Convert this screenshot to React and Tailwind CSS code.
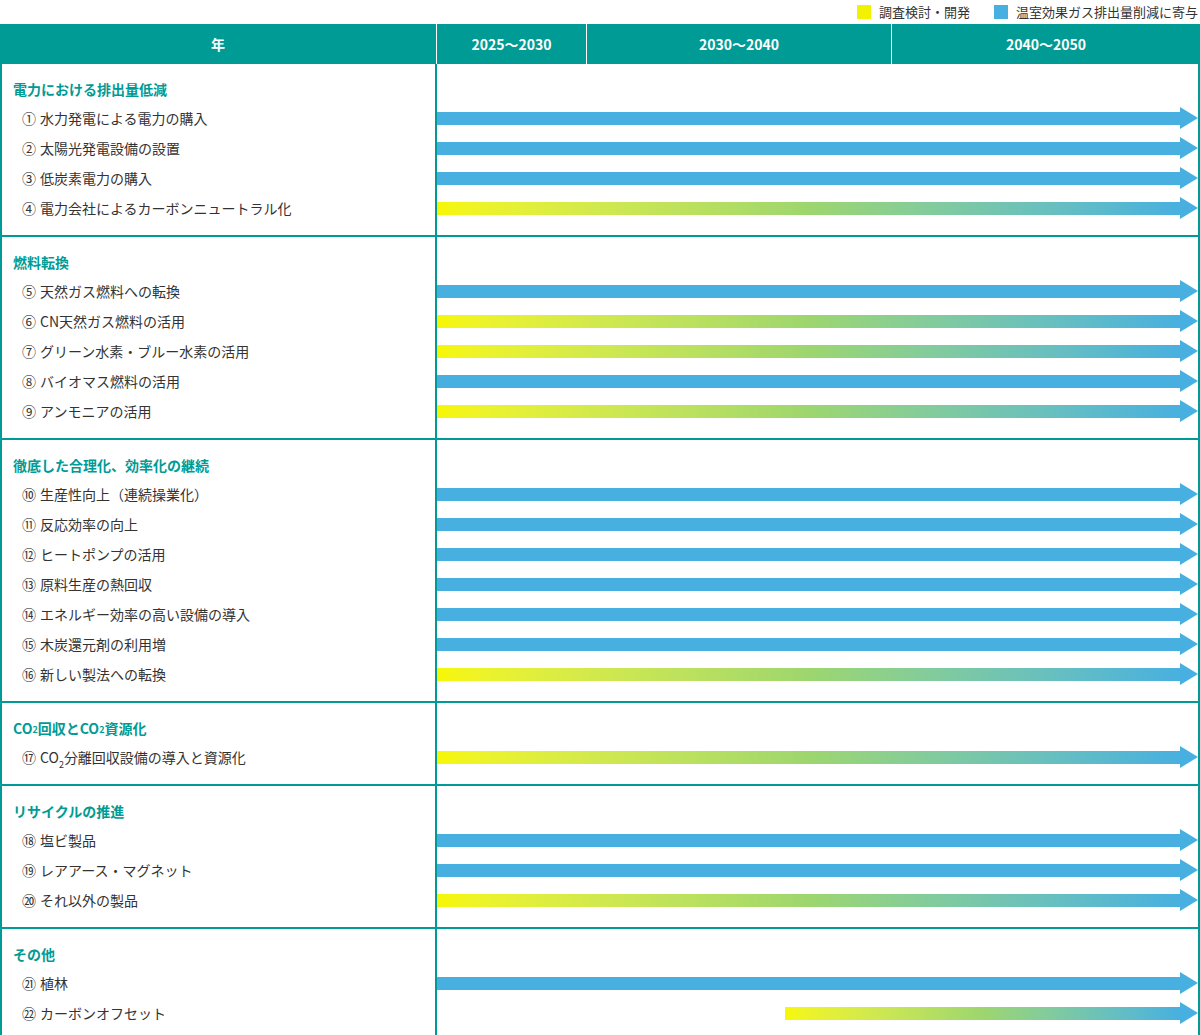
import React from 'react';

const sections = [
  { title: '電力における排出量低減', rows: [
    ['①', '水力発電による電力の購入', 'b'],
    ['②', '太陽光発電設備の設置', 'b'],
    ['③', '低炭素電力の購入', 'b'],
    ['④', '電力会社によるカーボンニュートラル化', 'g'],
  ]},
  { title: '燃料転換', rows: [
    ['⑤', '天然ガス燃料への転換', 'b'],
    ['⑥', 'CN天然ガス燃料の活用', 'g'],
    ['⑦', 'グリーン水素・ブルー水素の活用', 'g'],
    ['⑧', 'バイオマス燃料の活用', 'b'],
    ['⑨', 'アンモニアの活用', 'g'],
  ]},
  { title: '徹底した合理化、効率化の継続', rows: [
    ['⑩', '生産性向上（連続操業化）', 'b'],
    ['⑪', '反応効率の向上', 'b'],
    ['⑫', 'ヒートポンプの活用', 'b'],
    ['⑬', '原料生産の熱回収', 'b'],
    ['⑭', 'エネルギー効率の高い設備の導入', 'b'],
    ['⑮', '木炭還元剤の利用増', 'b'],
    ['⑯', '新しい製法への転換', 'g'],
  ]},
  { title: 'co2', rows: [
    ['⑰', 'co2row', 'g'],
  ]},
  { title: 'リサイクルの推進', rows: [
    ['⑱', '塩ビ製品', 'b'],
    ['⑲', 'レアアース・マグネット', 'b'],
    ['⑳', 'それ以外の製品', 'g'],
  ]},
  { title: 'その他', rows: [
    ['㉑', '植林', 'b'],
    ['㉒', 'カーボンオオフセット'.replace('オオ', 'オ'), 'late'],
  ]},
];

const CO2 = () => <>CO<sub className="text-[9px] align-[-3px]">2</sub></>;

const Arrow = ({ kind }) => {
  const grad = kind !== 'b';
  return (
    <div className={`flex items-center h-[22px] ${kind === 'late' ? 'pl-[348px]' : ''}`}>
      <div className={`flex-1 h-[13px] ${grad ? 'bg-gradient-to-r from-[#f7f700] via-[#9dd66e] to-[#48b0e0]' : 'bg-[#48b0e0]'}`} />
      <svg width="18" height="22" viewBox="0 0 18 22" className="shrink-0">
        <polygon points="0,0 18,11 0,22" fill="#48b0e0" />
      </svg>
    </div>
  );
};

export default function App() {
  return (
    <div className="w-[1200px] bg-white text-[#333] text-[14px]" style={{ fontFamily: '"Noto Sans CJK JP", "Noto Sans", sans-serif' }}>
      <div className="h-[24px] flex justify-end items-center gap-6 pr-[2px] text-[13px]">
        <div className="flex items-center gap-2"><span className="w-[14px] h-[14px] bg-[#f2f200]" />調査検討・開発</div>
        <div className="flex items-center gap-2"><span className="w-[14px] h-[14px] bg-[#48b0e0]" />温室効果ガス排出量削減に寄与</div>
      </div>
      <div className="flex h-[40px] bg-[#009b94] text-white font-bold text-[14px]">
        <div className="w-[437px] flex items-center justify-center border-r border-white">年</div>
        <div className="w-[150px] flex items-center justify-center border-r border-white">2025～2030</div>
        <div className="w-[305px] flex items-center justify-center border-r border-white">2030～2040</div>
        <div className="flex-1 flex items-center justify-center">2040～2050</div>
      </div>
      <div className="border-l-2 border-r-2 border-b-2 border-[#009b94]">
        {sections.map((s, i) => (
          <div key={i} className={`flex ${i > 0 ? 'border-t-2 border-[#009b94]' : ''}`}>
            <div className="w-[435px] border-r-2 border-[#009b94] pt-[11px] pb-[12px]">
              <div className="h-[28px] flex items-center pl-[11px] font-bold text-[#009b94]">
                {s.title === 'co2' ? <><CO2 />回収と<CO2 />資源化</> : s.title}
              </div>
              {s.rows.map((r, j) => (
                <div key={j} className="h-[30px] flex items-center pl-[20px] gap-[4px]">
                  <span className="text-[14px]">{r[0]}</span>
                  <span>{r[1] === 'co2row' ? <><CO2 />分離回収設備の導入と資源化</> : r[1]}</span>
                </div>
              ))}
            </div>
            <div className="flex-1 pt-[39px] pb-[12px]">
              {s.rows.map((r, j) => (
                <div key={j} className="h-[30px] flex items-center">
                  <div className="flex-1"><Arrow kind={r[2]} /></div>
                </div>
              ))}
            </div>
          </div>
        ))}
      </div>
    </div>
  );
}
